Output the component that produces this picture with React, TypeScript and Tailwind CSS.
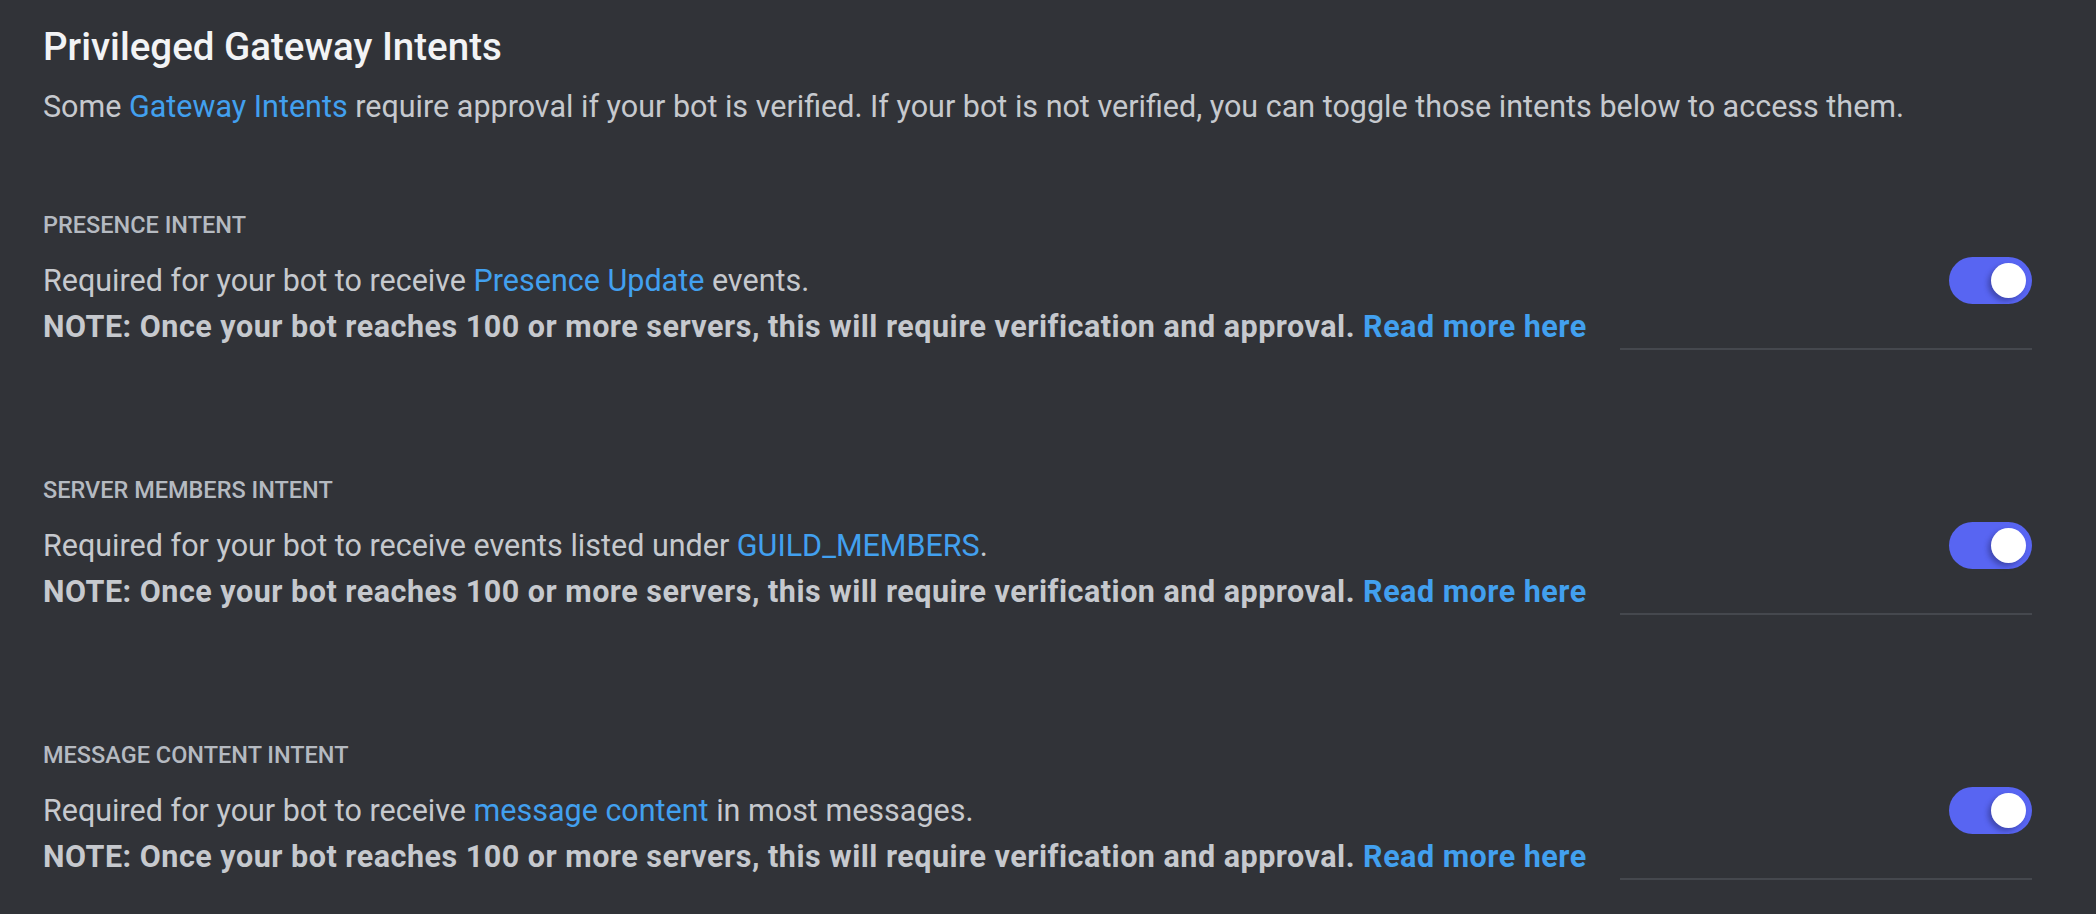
import React, { useState } from 'react';

type Intent = {
  id: string;
  label: string;
  before: string;
  link: string;
  after: string;
};

const intents: Intent[] = [
  { id: 'presence', label: 'PRESENCE INTENT', before: 'Required for your bot to receive ', link: 'Presence Update', after: ' events.' },
  { id: 'members', label: 'SERVER MEMBERS INTENT', before: 'Required for your bot to receive events listed under ', link: 'GUILD_MEMBERS', after: '.' },
  { id: 'content', label: 'MESSAGE CONTENT INTENT', before: 'Required for your bot to receive ', link: 'message content', after: ' in most messages.' },
];

const Toggle: React.FC<{ on: boolean; onChange: () => void }> = ({ on, onChange }) => (
  <button
    onClick={onChange}
    className={`relative w-[83px] h-[47px] rounded-full flex items-center px-[6px] transition-colors ${on ? 'bg-[#5865f2] justify-end' : 'bg-[#80848e] justify-start'}`}
  >
    <span className="block w-[35px] h-[35px] rounded-full bg-white shadow-[-3px_3px_5px_rgba(20,20,60,0.35)]" />
  </button>
);

const App: React.FC = () => {
  const [enabled, setEnabled] = useState<Record<string, boolean>>({ presence: true, members: true, content: true });

  return (
    <div className="min-h-screen w-full bg-[#313338] pl-[43px] pr-[64px] pt-[23px] font-['Roboto',_'Noto_Sans',_sans-serif]">
      <h2 className="text-[38.5px] leading-[48px] font-medium text-[#f2f3f5]">Privileged Gateway Intents</h2>
      <p className="mt-[18px] text-[30.5px] leading-[36px] text-[#c6c9ce]">
        Some <a className="text-[#42a0ef]">Gateway Intents</a> require approval if your bot is verified. If your bot is not verified, you can toggle those intents below to access them.
      </p>

      <div className="mt-[86px] flex flex-col gap-[126px]">
        {intents.map((it) => (
          <section key={it.id}>
            <h3 className="text-[23.5px] leading-[28px] font-medium text-[#b5bac1]">{it.label}</h3>
            <div className="mt-[19px] flex justify-between">
              <div className="text-[30.5px] leading-[46px] text-[#c6c9ce]">
                <div>
                  {it.before}
                  <a className="text-[#42a0ef]">{it.link}</a>
                  {it.after}
                </div>
                <div className="font-bold tracking-[0.5px]">
                  NOTE: Once your bot reaches 100 or more servers, this will require verification and approval.{' '}
                  <a className="text-[#42a0ef]">Read more here</a>
                </div>
              </div>
              <div className="w-[412px] flex flex-col items-end justify-between border-b-2 border-[#45484e]">
                <div className="mt-[-1px]">
                  <Toggle on={enabled[it.id]} onChange={() => setEnabled({ ...enabled, [it.id]: !enabled[it.id] })} />
                </div>
              </div>
            </div>
          </section>
        ))}
      </div>
    </div>
  );
};

export default App;
